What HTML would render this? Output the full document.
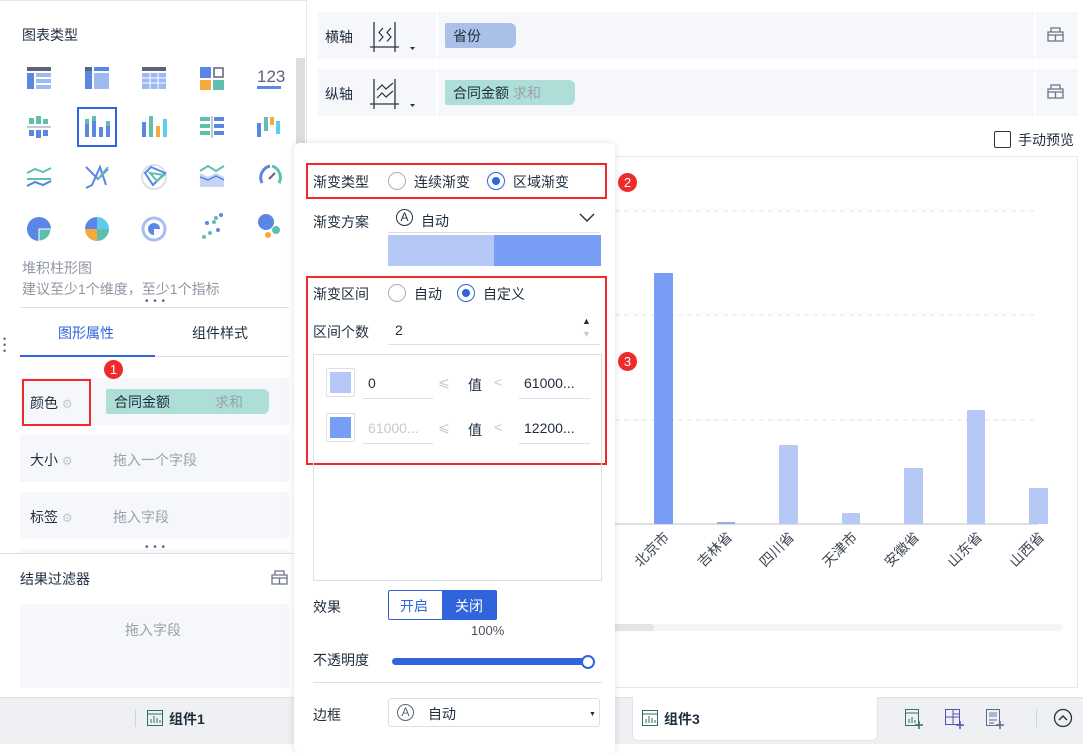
<!DOCTYPE html>
<html><head><meta charset="utf-8">
<style>
*{margin:0;padding:0;box-sizing:border-box}
body{width:1083px;height:744px;overflow:hidden;background:#fff;font-family:"Liberation Sans","Noto Sans CJK SC",sans-serif;font-size:14px;color:#1f2d3d;position:relative}
.a{position:absolute}
.t{position:absolute;white-space:nowrap}
.gray{color:#9aa0ab}
.row{position:absolute;background:#f5f7fb}
.red{position:absolute;border:2px solid #ee2a2a}
.badge{position:absolute;width:19px;height:19px;border-radius:50%;background:#ee2a2a;color:#fff;font-size:13px;line-height:19px;text-align:center}
.radio{position:absolute;width:18px;height:18px;border:1px solid #a9b0bd;border-radius:50%}
.radio.on{border-color:#2f64db}
.radio.on:after{content:"";position:absolute;left:4px;top:4px;width:8px;height:8px;border-radius:50%;background:#2f64db}
.line{position:absolute;height:1px;background:#dcdfe6}
</style></head><body>

<!-- left panel -->
<div class="a" style="left:0;top:0;width:307px;height:697px;border-right:1px solid #e4e7ed;border-top:1px solid #e4e7ed"></div>
<div class="t" style="left:22px;top:25px;font-size:14px">图表类型</div>
<div class="a" style="left:296px;top:58px;width:9px;height:250px;background:#dcdde1"></div>

<svg class="a" style="left:0;top:55px" width="295" height="200">
 <rect x="27" y="12" width="24" height="4" fill="#5b6478"/><rect x="27" y="18" width="7" height="16" fill="#5b86e5"/><rect x="36" y="18" width="15" height="4" fill="#9fbaf3"/><rect x="36" y="24" width="15" height="4" fill="#9fbaf3"/><rect x="36" y="30" width="15" height="4" fill="#9fbaf3"/>
 <rect x="85" y="12" width="7" height="22" fill="#5b86e5"/><rect x="85" y="12" width="7" height="4" fill="#5b6478"/><rect x="94" y="12" width="15" height="4" fill="#5b86e5"/><rect x="94" y="18" width="15" height="16" fill="#9fbaf3"/>
 <rect x="142" y="12" width="24" height="4" fill="#5b6478"/><rect x="142" y="18" width="24" height="16" fill="#9fbaf3"/><path d="M142 23h24M142 28h24M150 18v16M158 18v16" stroke="#fff"/>
 <rect x="200" y="12" width="11" height="11" fill="#5b86e5"/><rect x="214" y="13" width="9" height="9" fill="none" stroke="#5b6478" stroke-width="1.5"/><rect x="200" y="25" width="11" height="10" fill="#f7a93b"/><rect x="213" y="25" width="11" height="10" fill="#5fbfae"/>
 <text x="257" y="27" font-size="17" fill="#5b6478" font-family="Liberation Sans">123</text><rect x="257" y="31" width="24" height="3" fill="#5b86e5"/>
 <rect x="27" y="71" width="24" height="2" fill="#c4c9d4"/><rect x="29" y="63" width="5" height="6" fill="#5fbfae"/><rect x="36" y="61" width="5" height="8" fill="#5fbfae"/><rect x="43" y="64" width="5" height="5" fill="#5fbfae"/><rect x="29" y="75" width="5" height="6" fill="#5b86e5"/><rect x="36" y="75" width="5" height="8" fill="#5b86e5"/><rect x="43" y="75" width="5" height="6" fill="#5b86e5"/>
 <rect x="78" y="53" width="38" height="38" fill="none" stroke="#2f64db" stroke-width="2"/>
 <rect x="85" y="64" width="4" height="5" fill="#5fbfae"/><rect x="85" y="69" width="4" height="13" fill="#5b86e5"/><rect x="92" y="61" width="4" height="5" fill="#5fbfae"/><rect x="92" y="66" width="4" height="16" fill="#5b86e5"/><rect x="99" y="72" width="4" height="10" fill="#5b86e5"/><rect x="106" y="66" width="4" height="5" fill="#5fbfae"/><rect x="106" y="71" width="4" height="11" fill="#5b86e5"/>
 <rect x="142" y="67" width="4" height="15" fill="#5b86e5"/><rect x="149" y="61" width="4" height="21" fill="#5fbfae"/><rect x="156" y="71" width="4" height="11" fill="#f7a93b"/><rect x="163" y="64" width="4" height="18" fill="#5ecbef"/>
 <rect x="211" y="61" width="2" height="22" fill="#c4c9d4"/><rect x="200" y="62" width="10" height="4" fill="#5fbfae"/><rect x="214" y="62" width="10" height="4" fill="#5b86e5"/><rect x="200" y="69" width="10" height="4" fill="#5fbfae"/><rect x="214" y="69" width="10" height="4" fill="#5b86e5"/><rect x="200" y="76" width="10" height="4" fill="#5fbfae"/><rect x="214" y="76" width="10" height="4" fill="#5b86e5"/>
 <rect x="257" y="68" width="4" height="14" fill="#5b86e5"/><rect x="264" y="62" width="4" height="14" fill="#5fbfae"/><rect x="270" y="62" width="4" height="8" fill="#f7a93b"/><rect x="276" y="66" width="4" height="13" fill="#5ecbef"/>
 <path d="M27 118l8-4 8 3 8-4M27 124h24M27 131l8-4 8 3 8-4" stroke="#5fbfae" stroke-width="2" fill="none"/><path d="M27 131l8-4 8 3 8-4" stroke="#5b86e5" stroke-width="2" fill="none"/>
 <path d="M86 133l6-3 8-18 6 18M86 112l12 12 10-10" stroke="#5b86e5" stroke-width="2" fill="none"/><path d="M98 124l10-12" stroke="#5fbfae" stroke-width="2"/>
 <circle cx="154" cy="122" r="12" fill="none" stroke="#dde1e8" stroke-width="2"/><path d="M145 118l6-6 14 6-12 12z" fill="none" stroke="#5b86e5" stroke-width="2"/><path d="M150 118l14 2-7 6z" fill="none" stroke="#5fbfae" stroke-width="2"/>
 <path d="M200 132v-14l8 4 8-4 8 4v10z" fill="#c5d4f7"/><path d="M200 116l8-5 8 5 8-5" stroke="#5fbfae" stroke-width="2" fill="none"/><path d="M200 122l8 3 8-4 8 4" stroke="#5b86e5" stroke-width="1.5" fill="none"/>
 <path d="M262 128a12 12 0 0 1 8-17" stroke="#5b86e5" stroke-width="3" fill="none"/><path d="M272 111a12 12 0 0 1 7 17" stroke="#5fbfae" stroke-width="3" fill="none"/><path d="M269 124l6-6" stroke="#5b6478" stroke-width="2"/>
 <circle cx="39" cy="174" r="12" fill="#5b86e5"/><path d="M39 174h12a12 12 0 0 1-12 12z" fill="#5fbfae" stroke="#fff"/>
 <path d="M97 174v-12a12 12 0 0 0-12 12z" fill="#5b86e5"/><path d="M97 174v-12a12 12 0 0 1 12 12z" fill="#5ecbef"/><path d="M97 174h-12a12 12 0 0 0 12 12z" fill="#f7a93b"/><path d="M97 174h12a12 12 0 0 1-12 12z" fill="#5fbfae"/>
 <circle cx="154" cy="174" r="11" fill="none" stroke="#a8bdf2" stroke-width="3"/><circle cx="154" cy="174" r="6" fill="#5b86e5"/><path d="M154 174h6a6 6 0 0 1-6 6z" fill="#fff"/>
 <circle cx="216" cy="163" r="2" fill="#5fbfae"/><circle cx="221" cy="160" r="2" fill="#5b86e5"/><circle cx="207" cy="168" r="2" fill="#5b86e5"/><circle cx="214" cy="167" r="2" fill="#5fbfae"/><circle cx="204" cy="182" r="2" fill="#5fbfae"/><circle cx="210" cy="178" r="2" fill="#5fbfae"/><circle cx="218" cy="175" r="2" fill="#5b86e5"/>
 <circle cx="266" cy="167" r="8" fill="#5b86e5"/><circle cx="276" cy="175" r="4" fill="#5fbfae"/><circle cx="268" cy="180" r="3" fill="#f7a93b"/>
</svg>

<div class="t gray" style="left:22px;top:258px;font-size:14px;color:#8f96a3">堆积柱形图</div>
<div class="t gray" style="left:22px;top:279px;font-size:14px;color:#8f96a3">建议至少1个维度，至少1个指标</div>
<div class="line" style="left:20px;top:307px;width:269px"></div>
<div class="t" style="left:145px;top:296px;color:#5b6478;letter-spacing:1px;font-size:10px">• • •</div>
<div class="t" style="left:3px;top:336px;color:#5b6478;font-size:9px;line-height:6px">•<br>•<br>•</div>
<div class="t" style="left:58px;top:323px;color:#2f64db">图形属性</div>
<div class="t" style="left:192px;top:323px">组件样式</div>
<div class="line" style="left:20px;top:356px;width:269px"></div>
<div class="a" style="left:20px;top:355px;width:135px;height:2px;background:#2f64db"></div>

<div class="row" style="left:20px;top:378px;width:269px;height:47px"></div>
<div class="row" style="left:20px;top:435px;width:269px;height:47px"></div>
<div class="row" style="left:20px;top:492px;width:269px;height:47px"></div>
<div class="row" style="left:20px;top:549px;width:269px;height:4px"></div>
<div class="red" style="left:22px;top:379px;width:69px;height:47px"></div>
<div class="badge" style="left:104px;top:360px">1</div>
<div class="t" style="left:30px;top:393px">颜色 <span style="color:#c0c4cc;font-size:12px">⚙</span></div>
<div class="a" style="left:106px;top:389px;width:163px;height:25px;background:#addfd8;border-radius:2px 6px 6px 2px"></div>
<div class="t" style="left:114px;top:392px">合同金额</div><div class="t gray" style="left:215px;top:392px">求和</div>
<div class="t" style="left:30px;top:450px">大小 <span style="color:#c0c4cc;font-size:12px">⚙</span></div>
<div class="t gray" style="left:113px;top:450px">拖入一个字段</div>
<div class="t" style="left:30px;top:507px">标签 <span style="color:#c0c4cc;font-size:12px">⚙</span></div>
<div class="t gray" style="left:113px;top:507px">拖入字段</div>
<div class="line" style="left:0;top:553px;width:295px"></div>
<div class="t" style="left:145px;top:542px;color:#5b6478;letter-spacing:1px;font-size:10px">• • •</div>
<div class="t" style="left:20px;top:569px">结果过滤器</div>
<svg class="a" style="left:271px;top:570px" width="17" height="15"><path d="M4 1h9v4h3v9H1V5h3zM1 8h15M8.5 8v6M4 5h9" fill="none" stroke="#6b7385" stroke-width="1.3"/></svg>
<div class="row" style="left:20px;top:604px;width:269px;height:84px"></div>
<div class="t gray" style="left:125px;top:620px">拖入字段</div>

<!-- bottom bar -->
<div class="a" style="left:0;top:697px;width:1083px;height:47px;background:#eef0f4;border-top:1px solid #e0e3ea"></div>
<div class="a" style="left:135px;top:709px;width:1px;height:18px;background:#cfd3dc"></div>
<svg class="a" style="left:147px;top:710px" width="16" height="16"><rect x="0.5" y="0.5" width="15" height="15" fill="none" stroke="#2f6e62"/><path d="M1 4h14M4 13V9M7 13V6M10 13V8M13 13v-3" stroke="#2f6e62"/></svg>
<div class="t" style="left:169px;top:709px;font-weight:bold">组件1</div>
<div class="a" style="left:632px;top:697px;width:246px;height:44px;background:#fff;border-radius:0 0 6px 6px;border:1px solid #e0e3ea;border-top:none"></div>
<svg class="a" style="left:642px;top:710px" width="16" height="16"><rect x="0.5" y="0.5" width="15" height="15" fill="none" stroke="#2f6e62"/><path d="M1 4h14M4 13V9M7 13V6M10 13V8M13 13v-3" stroke="#2f6e62"/></svg>
<div class="t" style="left:664px;top:709px;font-weight:bold">组件3</div>
<svg class="a" style="left:904px;top:708px" width="120" height="22">
 <rect x="1.5" y="1.5" width="13" height="16" fill="none" stroke="#3b6f62"/><path d="M2 5h12M5 15v-4M8 15v-6M11 15v-3" stroke="#3b6f62"/><path d="M15 13v8M11 17h8" stroke="#3b6f62" stroke-width="1.5"/>
 <rect x="41.5" y="1.5" width="14" height="15" fill="none" stroke="#5a4fae"/><path d="M41 9h15M49 2v15M49 6h7" stroke="#5a4fae"/><path d="M56 13v8M52 17h8" stroke="#5a4fae" stroke-width="1.5"/>
 <rect x="82.5" y="1.5" width="13" height="16" fill="none" stroke="#5b6a8a"/><rect x="85" y="4" width="8" height="5" fill="#aab6d8"/><path d="M85 12h8M85 15h5" stroke="#5b6a8a"/><path d="M96 13v8M92 17h8" stroke="#5b6a8a" stroke-width="1.5"/>
</svg>
<div class="a" style="left:1036px;top:709px;width:1px;height:18px;background:#cfd3dc"></div>
<svg class="a" style="left:1053px;top:708px" width="20" height="20"><circle cx="10" cy="10" r="8.5" fill="none" stroke="#2c3440" stroke-width="1.3"/><path d="M6 12l4-4 4 4" fill="none" stroke="#2c3440" stroke-width="1.5"/></svg>

<!-- top axis rows -->
<div class="row" style="left:318px;top:12px;width:760px;height:47px"></div>
<div class="row" style="left:318px;top:69px;width:760px;height:47px"></div>
<div class="a" style="left:436px;top:12px;width:2px;height:104px;background:#fff"></div>
<div class="a" style="left:1034px;top:12px;width:2px;height:104px;background:#fff"></div>
<div class="t" style="left:325px;top:27px">横轴</div>
<div class="t" style="left:325px;top:84px">纵轴</div>
<svg class="a" style="left:370px;top:20px" width="50" height="90">
 <path d="M4 2v30M25 2v30M0 27h29" stroke="#2c3440" stroke-width="1.3" fill="none"/><path d="M13 8l-4 4.5 4 4.5-4 4.5M21 8l-4 4.5 4 4.5-4 4.5" stroke="#2c3440" stroke-width="1.2" fill="none"/><path d="M40 27h5l-2.5 3z" fill="#2c3440"/>
 <path d="M4 59v30M25 59v30M0 84h29" stroke="#2c3440" stroke-width="1.3" fill="none"/><path d="M7 70l5-5 4 4 7-6M7 78l5-5 4 4 7-6" stroke="#2c3440" stroke-width="1.2" fill="none"/><path d="M40 84h5l-2.5 3z" fill="#2c3440"/>
</svg>
<div class="a" style="left:445px;top:23px;width:71px;height:25px;background:#aac0e8;border-radius:2px 6px 6px 2px"></div>
<div class="t" style="left:453px;top:26px">省份</div>
<div class="a" style="left:445px;top:80px;width:130px;height:25px;background:#addfd8;border-radius:2px 6px 6px 2px"></div>
<div class="t" style="left:453px;top:83px">合同金额 <span class="gray">求和</span></div>
<svg class="a" style="left:1047px;top:27px" width="17" height="15"><path d="M4 1h9v4h3v9H1V5h3zM1 8h15M8.5 8v6M4 5h9" fill="none" stroke="#6b7385" stroke-width="1.3"/></svg>
<svg class="a" style="left:1047px;top:84px" width="17" height="15"><path d="M4 1h9v4h3v9H1V5h3zM1 8h15M8.5 8v6M4 5h9" fill="none" stroke="#6b7385" stroke-width="1.3"/></svg>
<div class="a" style="left:994px;top:131px;width:17px;height:17px;border:1px solid #2c3440;border-radius:2px"></div>
<div class="t" style="left:1018px;top:130px">手动预览</div>

<!-- chart -->
<div class="a" style="left:318px;top:156px;width:760px;height:532px;border:1px solid #e4e7ed"></div>
<svg class="a" style="left:318px;top:156px" width="760" height="532">
 <path d="M0 55H720M0 159H720M0 264H720" stroke="#e3e5ea" stroke-dasharray="5 4"/>
 <path d="M0 368H720" stroke="#d4d6da" stroke-width="1.5"/>
 <rect x="336" y="117" width="19" height="251" rx="1" fill="#789df5"/>
 <rect x="399" y="366" width="18" height="2" fill="#9aaee0"/>
 <rect x="461" y="289" width="19" height="79" rx="1" fill="#b6c8f6"/>
 <rect x="524" y="357" width="18" height="11" rx="1" fill="#b6c8f6"/>
 <rect x="586" y="312" width="19" height="56" rx="1" fill="#b6c8f6"/>
 <rect x="649" y="254" width="18" height="114" rx="1" fill="#b6c8f6"/>
 <rect x="711" y="332" width="19" height="36" rx="1" fill="#b6c8f6"/>
 <g font-size="14" fill="#3f4655" font-family="Liberation Sans,Noto Sans CJK SC,sans-serif" text-anchor="end">
  <text transform="translate(352,382) rotate(-45)">北京市</text>
  <text transform="translate(415,382) rotate(-45)">吉林省</text>
  <text transform="translate(477,382) rotate(-45)">四川省</text>
  <text transform="translate(540,382) rotate(-45)">天津市</text>
  <text transform="translate(602,382) rotate(-45)">安徽省</text>
  <text transform="translate(665,382) rotate(-45)">山东省</text>
  <text transform="translate(727,382) rotate(-45)">山西省</text>
 </g>
 <rect x="280" y="468" width="465" height="7" rx="3.5" fill="#f3f4f6"/>
 <rect x="280" y="468" width="56" height="7" rx="3.5" fill="#e3e5e9"/>
</svg>

<!-- popup -->
<div class="a" style="left:294px;top:143px;width:321px;height:610px;background:#fff;border-radius:6px;box-shadow:0 0 8px rgba(0,0,0,0.12)"></div>
<div class="red" style="left:306px;top:163px;width:301px;height:36px"></div>
<div class="badge" style="left:618px;top:173px">2</div>
<div class="t" style="left:313px;top:172px">渐变类型</div>
<div class="radio" style="left:388px;top:172px"></div><div class="t" style="left:414px;top:172px">连续渐变</div>
<div class="radio on" style="left:487px;top:172px"></div><div class="t" style="left:513px;top:172px">区域渐变</div>
<div class="t" style="left:313px;top:212px">渐变方案</div>
<div class="a" style="left:396px;top:209px;width:17px;height:17px;border:1.5px solid #2c3440;border-radius:50%;font-size:12px;line-height:14px;text-align:center">A</div>
<div class="t" style="left:421px;top:211px">自动</div>
<svg class="a" style="left:579px;top:213px" width="16" height="10"><path d="M1 1l7 7 7-7" fill="none" stroke="#2c3440" stroke-width="1.5"/></svg>
<div class="line" style="left:388px;top:232px;width:212px"></div>
<div class="a" style="left:388px;top:235px;width:106px;height:31px;background:#b6c8f6"></div>
<div class="a" style="left:494px;top:235px;width:107px;height:31px;background:#789df5"></div>

<div class="red" style="left:306px;top:276px;width:301px;height:189px"></div>
<div class="badge" style="left:618px;top:352px">3</div>
<div class="t" style="left:313px;top:284px">渐变区间</div>
<div class="radio" style="left:388px;top:284px"></div><div class="t" style="left:414px;top:284px">自动</div>
<div class="radio on" style="left:457px;top:284px"></div><div class="t" style="left:483px;top:284px">自定义</div>
<div class="t" style="left:313px;top:322px">区间个数</div>
<div class="t" style="left:395px;top:322px">2</div>
<div class="t" style="left:582px;top:316px;font-size:9px">▲</div>
<div class="t" style="left:582px;top:329px;font-size:9px;color:#c5cad3">▼</div>
<div class="line" style="left:388px;top:344px;width:212px"></div>
<div class="a" style="left:313px;top:354px;width:289px;height:227px;border:1px solid #dcdfe6"></div>
<div class="a" style="left:326px;top:368px;width:29px;height:29px;border:1px solid #dcdfe6;border-radius:2px"><div style="margin:3px;width:21px;height:21px;background:#b6c8f6"></div></div>
<div class="a" style="left:326px;top:413px;width:29px;height:29px;border:1px solid #dcdfe6;border-radius:2px"><div style="margin:3px;width:21px;height:21px;background:#789df5"></div></div>
<div class="t" style="left:368px;top:375px">0</div>
<div class="t" style="left:368px;top:420px;color:#c5cad3">61000...</div>
<div class="line" style="left:363px;top:398px;width:70px"></div><div class="line" style="left:363px;top:443px;width:70px"></div>
<div class="t" style="left:438px;top:374px;color:#c5cad3">⩽</div><div class="t" style="left:438px;top:419px;color:#c5cad3">⩽</div>
<div class="t" style="left:468px;top:375px">值</div><div class="t" style="left:468px;top:420px">值</div>
<div class="t" style="left:494px;top:374px;color:#c5cad3">&lt;</div><div class="t" style="left:494px;top:419px;color:#c5cad3">&lt;</div>
<div class="t" style="left:524px;top:375px">61000...</div><div class="t" style="left:524px;top:420px">12200...</div>
<div class="line" style="left:519px;top:398px;width:71px"></div><div class="line" style="left:519px;top:443px;width:71px"></div>

<div class="t" style="left:313px;top:597px">效果</div>
<div class="a" style="left:388px;top:590px;width:109px;height:30px;border:1px solid #2f64db;border-radius:2px"></div>
<div class="t" style="left:400px;top:596px;color:#2f64db">开启</div>
<div class="a" style="left:442px;top:590px;width:55px;height:30px;background:#2f64db;border-radius:0 2px 2px 0"></div>
<div class="t" style="left:455px;top:596px;color:#fff">关闭</div>
<div class="t" style="left:471px;top:623px;font-size:13px;color:#4a5160">100%</div>
<div class="t" style="left:313px;top:650px">不透明度</div>
<div class="a" style="left:392px;top:658px;width:196px;height:7px;background:#2f64db;border-radius:4px"></div>
<div class="a" style="left:581px;top:655px;width:14px;height:14px;background:#fff;border:2px solid #2f64db;border-radius:50%"></div>
<div class="line" style="left:313px;top:682px;width:289px"></div>
<div class="t" style="left:313px;top:705px">边框</div>
<div class="a" style="left:388px;top:698px;width:212px;height:29px;border:1px solid #dcdfe6;border-radius:3px"></div>
<div class="a" style="left:397px;top:704px;width:17px;height:17px;border:1.5px solid #5b6478;border-radius:50%;font-size:12px;line-height:14px;text-align:center;color:#5b6478">A</div>
<div class="t" style="left:428px;top:704px">自动</div>
<div class="t" style="left:589px;top:711px;font-size:7px">▼</div>
</body></html>
